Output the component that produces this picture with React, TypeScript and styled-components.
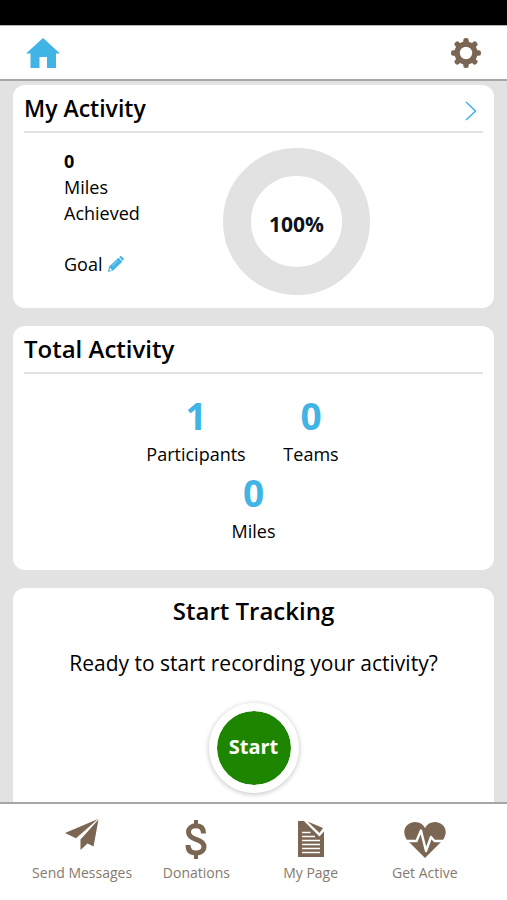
import React from "react";
import styled, { createGlobalStyle } from "styled-components";

const GlobalStyle = createGlobalStyle`
  * { box-sizing: border-box; }
  html, body { margin: 0; background: #fff; }
  body, button { font-family: "Open Sans", "Noto Sans", sans-serif; }
  h2, p, dl, dd, dt { margin: 0; }
  svg { display: block; flex: none; }
`;

const colors = { blue: "#40b4e5", brown: "#7a6652", label: "#857a6e", grey: "#e2e2e2", green: "#1e8500" };

const Page = styled.div`
  display: flex;
  flex-direction: column;
  height: 100vh;
  overflow: hidden;
  color: #000;
`;

const StatusBar = styled.div`
  flex: none;
  height: 25px;
  background: #000;
`;

const Header = styled.header`
  flex: none;
  display: flex;
  align-items: center;
  justify-content: space-between;
  height: 56px;
  padding: 0 26px;
  background: #fff;
  border-top: 1px solid #b5b5b5;
  border-bottom: 2px solid #a6a6a6;
`;

const IconButton = styled.button`
  display: flex;
  align-items: center;
  padding: 0;
  border: 0;
  background: none;
  cursor: pointer;
`;

const IconLink = styled.a`
  display: flex;
`;

const Content = styled.main`
  flex: 1;
  min-height: 0;
  display: flex;
  flex-direction: column;
  gap: 18px;
  padding: 4px 13px 0;
  overflow: hidden;
  background: ${colors.grey};
`;

const Card = styled.section`
  flex: none;
  padding: 0 11px;
  background: #fff;
  border-radius: 12px;
`;

const CardHeader = styled.div`
  display: flex;
  align-items: flex-end;
  justify-content: space-between;
  height: 48px;
  padding-right: 6px;
  border-bottom: 2px solid ${colors.grey};
`;

const DetailsLink = styled(IconLink)`
  padding-bottom: 10px;
`;

const Title = styled.h2<{ $compact?: boolean }>`
  font-size: ${({ $compact }) => ($compact ? 23 : 24)}px;
  line-height: 46px;
  font-weight: 600;
`;

const ActivityBody = styled.div`
  display: grid;
  grid-template-columns: 159px 1fr;
  padding: 15px 0 13px 40px;
`;

const Progress = styled.div`
  font-size: 18px;
  line-height: 26px;
`;

const GoalRow = styled.div`
  display: flex;
  align-items: center;
  gap: 6px;
  margin-top: 25px;
`;

const Ring = styled.div`
  display: flex;
  align-items: center;
  justify-content: center;
  width: 147px;
  height: 147px;
  padding-top: 4px;
  border: 28px solid ${colors.grey};
  border-radius: 50%;
  font-size: 21px;
  line-height: 28px;
  font-weight: 700;
  color: #0b1220;
`;

const Totals = styled.dl`
  display: flex;
  flex-wrap: wrap;
  justify-content: center;
  max-width: 230px;
  margin: 0 auto;
  padding: 16px 0 26px;
`;

const Total = styled.div`
  display: flex;
  flex-direction: column-reverse;
  align-items: center;
  width: 50%;
`;

const TotalValue = styled.dd`
  font-size: 37px;
  line-height: 51px;
  font-weight: 700;
  color: ${colors.blue};
`;

const TotalLabel = styled.dt`
  font-size: 18px;
  line-height: 26px;
`;

const TrackingCard = styled(Card)`
  display: flex;
  flex-direction: column;
  align-items: center;
  padding-bottom: 24px;
  text-align: center;
`;

const Prompt = styled.p`
  margin: 14px 0 25px;
  font-size: 21px;
  line-height: 30px;
`;

const StartButton = styled.button`
  width: 90px;
  height: 90px;
  padding: 0 0 2px;
  border: 8px solid #fff;
  border-radius: 50%;
  background: ${colors.green};
  background-clip: padding-box;
  box-shadow: 0 1px 4px 1px #d2d2d2;
  color: #fff;
  font-size: 20px;
  line-height: 28px;
  font-weight: 700;
  cursor: pointer;
`;

const TabBar = styled.nav`
  flex: none;
  display: grid;
  grid-template-columns: repeat(4, 1fr);
  height: 98px;
  padding: 15px 25px 0;
  background: #fff;
  border-top: 2px solid #a6a6a6;
`;

const Tab = styled.a`
  display: flex;
  flex-direction: column;
  align-items: center;
  gap: 4px;
  color: ${colors.label};
  font-size: 14px;
  line-height: 20px;
  text-decoration: none;
  white-space: nowrap;
`;

const HomeIcon = () => (
  <svg width="34" height="32" viewBox="0 0 34 32" fill={colors.blue}>
    <path d="M17 1 0 16.5h4.5V31h9V20h7.5v11h9V16.5h4Z" />
  </svg>
);

const GearIcon = () => (
  <svg width="30" height="30" viewBox="-15 -15 30 30" fill={colors.brown}>
    {[0, 45, 90, 135].map((angle) => (
      <rect key={angle} x="-2.7" y="-15" width="5.4" height="30" rx="2.2" transform={`rotate(${angle})`} />
    ))}
    <circle r="11.6" />
    <circle r="6.2" fill="#fff" />
  </svg>
);

const ChevronIcon = () => (
  <svg width="12" height="20" viewBox="0 0 12 20" fill="none" stroke={colors.blue} strokeWidth="1.5">
    <path d="m1 1 9.5 9L1 19" />
  </svg>
);

const PencilIcon = () => (
  <svg width="16" height="16" viewBox="0 0 16 16" fill={colors.blue}>
    <path d="m11.2 1 1-.8q.6-.4 1.2.1l2.2 2.3q.6.6 0 1.2l-1 1Z" />
    <path d="m10.4 1.7 3.9 4.1-9.2 8.8L0 16l1.2-5.4Z" />
    <path d="m2 12 2.2 2.2-2 .5-.7-.7Z" fill="#fff" />
    <path d="m4.2 10 6-5.6" stroke="#a9def5" strokeWidth=".8" />
  </svg>
);

const PlaneIcon = () => (
  <svg width="34" height="40" viewBox="0 0 34 40" fill={colors.brown}>
    <path d="M33 0 0 14l11 5.3Z" />
    <path d="m33.5.5-5 27-6-3L15.5 31V20.5Z" />
  </svg>
);

const DollarIcon = () => (
  <svg width="22" height="40" viewBox="0 0 22 40" fill="none" stroke={colors.brown}>
    <path d="M11 1v7M11 33v7" strokeWidth="4" />
    <path d="M18.5 14.5C18.5 9 15.5 6.8 11 6.8S3.5 9.5 3.5 13c0 4 3 5.8 7.5 7.3 5 1.6 8 3.2 8 7.3 0 4-3.2 6.5-8 6.5-5 0-8-2.6-8-8" strokeWidth="5" />
  </svg>
);

const DocumentIcon = () => (
  <svg width="28" height="40" viewBox="0 0 28 40">
    <path d="M1 2h6l15.500 15.500L27 12.500V38H1Z" fill={colors.brown} />
    <path d="m10.500 2.500 15.500 6.500-3.500 5Z" fill={colors.brown} />
    <path d="M5 13.500h8.500M5 17.500h13M5 21.500h18M5 25.500h18M5 29.500h18M5 33.500h18" stroke="#fff" strokeWidth="1.700" />
  </svg>
);

const HeartIcon = () => (
  <svg width="42" height="40" viewBox="0 0 42 40">
    <path d="M21 39 3 21C-4 10 4 3 11 3q7 0 10 6 3-6 10-6c7 0 15 7 8 18Z" fill={colors.brown} />
    <path d="M1 22h11.500L17 11.500 22 32l5-14 3.500 4H41" fill="none" stroke="#fff" strokeWidth="2.400" strokeLinejoin="round" />
  </svg>
);

const totals = [
  { label: "Participants", value: 1 },
  { label: "Teams", value: 0 },
  { label: "Miles", value: 0 },
];

const tabs = [
  { label: "Send Messages", Icon: PlaneIcon },
  { label: "Donations", Icon: DollarIcon },
  { label: "My Page", Icon: DocumentIcon },
  { label: "Get Active", Icon: HeartIcon },
];

export default function App() {
  return (
    <Page>
      <GlobalStyle />
      <StatusBar />
      <Header>
        <IconLink href="#home" aria-label="Home"><HomeIcon /></IconLink>
        <IconButton aria-label="Settings"><GearIcon /></IconButton>
      </Header>
      <Content>
        <Card>
          <CardHeader>
            <Title $compact>My Activity</Title>
            <DetailsLink href="#activity" aria-label="Activity details"><ChevronIcon /></DetailsLink>
          </CardHeader>
          <ActivityBody>
            <Progress>
              <strong>0</strong>
              <p>Miles</p>
              <p>Achieved</p>
              <GoalRow>
                Goal
                <IconButton aria-label="Edit goal"><PencilIcon /></IconButton>
              </GoalRow>
            </Progress>
            <Ring>100%</Ring>
          </ActivityBody>
        </Card>
        <Card>
          <CardHeader>
            <Title>Total Activity</Title>
          </CardHeader>
          <Totals>
            {totals.map(({ label, value }) => (
              <Total key={label}>
                <TotalLabel>{label}</TotalLabel>
                <TotalValue>{value}</TotalValue>
              </Total>
            ))}
          </Totals>
        </Card>
        <TrackingCard>
          <Title>Start Tracking</Title>
          <Prompt>Ready to start recording your activity?</Prompt>
          <StartButton>Start</StartButton>
        </TrackingCard>
      </Content>
      <TabBar>
        {tabs.map(({ label, Icon }) => (
          <Tab key={label} href="#">
            <Icon />
            {label}
          </Tab>
        ))}
      </TabBar>
    </Page>
  );
}
